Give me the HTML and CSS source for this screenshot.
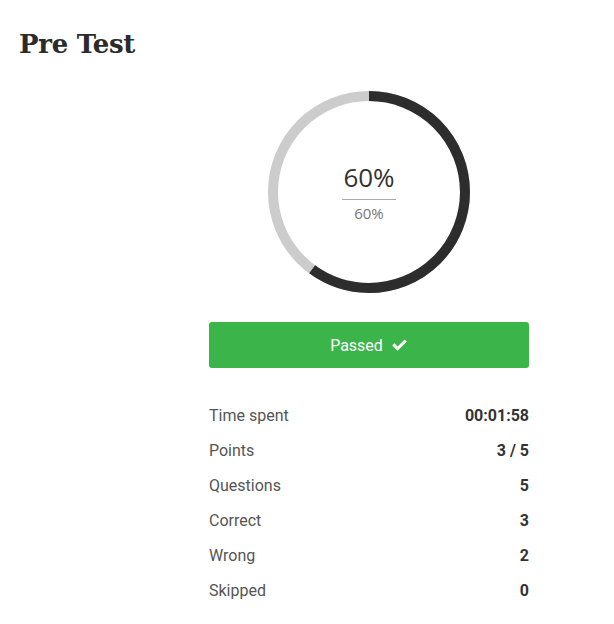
FILE: index.html
```html
<!DOCTYPE html>
<html>
<head>
<meta charset="utf-8">
<link rel="stylesheet" href="styles.css">
</head>
<body>
<div class="page">
  <h1 class="title">Pre Test</h1>
  <div class="result">
    <div class="chart">
      <svg class="ring" width="202" height="202" viewBox="0 0 202 202">
        <circle cx="101" cy="101" r="96" fill="none" stroke="#cccccc" stroke-width="10"/>
        <circle cx="101" cy="101" r="96" fill="none" stroke="#2d2d2d" stroke-width="10"
          stroke-dasharray="361.9 603.2" transform="rotate(-90 101 101)"/>
      </svg>
      <div class="chart-text">
        <div class="pct-main">60%</div>
        <div class="pct-sub">60%</div>
      </div>
    </div>
    <div class="status">
      <span>Passed</span>
      <svg class="check" width="17" height="14" viewBox="0 0 17 14">
        <path d="M1.2 7.4 L3.4 5.2 L6.6 8.4 L13.6 1.4 L15.8 3.6 L6.6 12.8 Z" fill="#fff"/>
      </svg>
    </div>
    <div class="stats">
      <div class="row"><span class="label">Time spent</span><span class="value">00:01:58</span></div>
      <div class="row"><span class="label">Points</span><span class="value">3 / 5</span></div>
      <div class="row"><span class="label">Questions</span><span class="value">5</span></div>
      <div class="row"><span class="label">Correct</span><span class="value">3</span></div>
      <div class="row"><span class="label">Wrong</span><span class="value">2</span></div>
      <div class="row"><span class="label">Skipped</span><span class="value">0</span></div>
    </div>
  </div>
</div>
</body>
</html>
```
FILE: styles.css
```css
html, body {
  margin: 0;
  padding: 0;
  background: #ffffff;
}
.page {
  padding: 26px 19px 0 19px;
}
.title {
  margin: 0;
  font-family: "DejaVu Serif", serif;
  font-weight: bold;
  font-size: 26px;
  line-height: 36px;
  color: #2b2b2b;
  letter-spacing: -0.3px;
}
.result {
  width: 320px;
  margin-left: 190px;
  margin-top: 29px;
  display: flex;
  flex-direction: column;
}
.chart {
  position: relative;
  width: 202px;
  height: 202px;
  align-self: center;
}
.ring {
  display: block;
}
.chart-text {
  position: absolute;
  inset: 0;
  display: flex;
  flex-direction: column;
  align-items: center;
  justify-content: center;
  font-family: "Open Sans", sans-serif;
}
.pct-main {
  font-size: 26px;
  line-height: 32px;
  color: #333333;
  padding: 0 1px 6px;
  border-bottom: 1px solid #aaaaaa;
}
.pct-sub {
  margin-top: 3px;
  font-size: 15px;
  line-height: 20px;
  color: #777777;
}
.status {
  margin-top: 29px;
  height: 46px;
  border-radius: 3px;
  background: #3bb44a;
  color: #ffffff;
  font-family: Roboto, sans-serif;
  font-size: 16px;
  display: flex;
  align-items: center;
  justify-content: center;
  gap: 8px;
}
.check {
  display: block;
}
.stats {
  margin-top: 30px;
  font-family: Roboto, sans-serif;
  font-size: 16px;
}
.row {
  display: flex;
  justify-content: space-between;
  height: 35px;
  line-height: 35px;
}
.label {
  color: #555555;
}
.value {
  color: #333333;
  font-weight: bold;
}
```
